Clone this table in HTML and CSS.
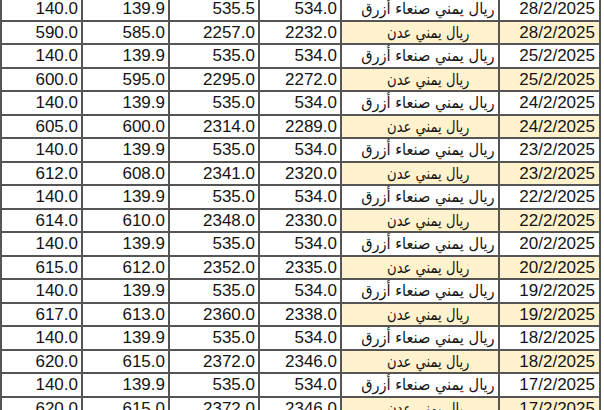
FILE: index.html
```html
<!DOCTYPE html>
<html lang="ar">
<head>
<meta charset="utf-8">
<title>أسعار الصرف</title>
<link rel="stylesheet" href="styles.css">
</head>
<body>
<table class="sheet" dir="ltr">
  <colgroup>
    <col class="c1"><col class="c2"><col class="c3"><col class="c4"><col class="c5"><col class="c6">
  </colgroup>
  <tbody>
    <tr><td>140.0</td><td>139.9</td><td>535.5</td><td>534.0</td><td class="name"><span class="ar">ريال يمني صنعاء أزرق</span></td><td class="date">28/2/2025</td></tr>
    <tr class="aden"><td>590.0</td><td>585.0</td><td>2257.0</td><td>2232.0</td><td class="name"><span class="ar">ريال يمني عدن</span></td><td class="date">28/2/2025</td></tr>
    <tr><td>140.0</td><td>139.9</td><td>535.0</td><td>534.0</td><td class="name"><span class="ar">ريال يمني صنعاء أزرق</span></td><td class="date">25/2/2025</td></tr>
    <tr class="aden"><td>600.0</td><td>595.0</td><td>2295.0</td><td>2272.0</td><td class="name"><span class="ar">ريال يمني عدن</span></td><td class="date">25/2/2025</td></tr>
    <tr><td>140.0</td><td>139.9</td><td>535.0</td><td>534.0</td><td class="name"><span class="ar">ريال يمني صنعاء أزرق</span></td><td class="date">24/2/2025</td></tr>
    <tr class="aden"><td>605.0</td><td>600.0</td><td>2314.0</td><td>2289.0</td><td class="name"><span class="ar">ريال يمني عدن</span></td><td class="date">24/2/2025</td></tr>
    <tr><td>140.0</td><td>139.9</td><td>535.0</td><td>534.0</td><td class="name"><span class="ar">ريال يمني صنعاء أزرق</span></td><td class="date">23/2/2025</td></tr>
    <tr class="aden"><td>612.0</td><td>608.0</td><td>2341.0</td><td>2320.0</td><td class="name"><span class="ar">ريال يمني عدن</span></td><td class="date">23/2/2025</td></tr>
    <tr><td>140.0</td><td>139.9</td><td>535.0</td><td>534.0</td><td class="name"><span class="ar">ريال يمني صنعاء أزرق</span></td><td class="date">22/2/2025</td></tr>
    <tr class="aden"><td>614.0</td><td>610.0</td><td>2348.0</td><td>2330.0</td><td class="name"><span class="ar">ريال يمني عدن</span></td><td class="date">22/2/2025</td></tr>
    <tr><td>140.0</td><td>139.9</td><td>535.0</td><td>534.0</td><td class="name"><span class="ar">ريال يمني صنعاء أزرق</span></td><td class="date">20/2/2025</td></tr>
    <tr class="aden"><td>615.0</td><td>612.0</td><td>2352.0</td><td>2335.0</td><td class="name"><span class="ar">ريال يمني عدن</span></td><td class="date">20/2/2025</td></tr>
    <tr><td>140.0</td><td>139.9</td><td>535.0</td><td>534.0</td><td class="name"><span class="ar">ريال يمني صنعاء أزرق</span></td><td class="date">19/2/2025</td></tr>
    <tr class="aden"><td>617.0</td><td>613.0</td><td>2360.0</td><td>2338.0</td><td class="name"><span class="ar">ريال يمني عدن</span></td><td class="date">19/2/2025</td></tr>
    <tr><td>140.0</td><td>139.9</td><td>535.0</td><td>534.0</td><td class="name"><span class="ar">ريال يمني صنعاء أزرق</span></td><td class="date">18/2/2025</td></tr>
    <tr class="aden"><td>620.0</td><td>615.0</td><td>2372.0</td><td>2346.0</td><td class="name"><span class="ar">ريال يمني عدن</span></td><td class="date">18/2/2025</td></tr>
    <tr><td>140.0</td><td>139.9</td><td>535.0</td><td>534.0</td><td class="name"><span class="ar">ريال يمني صنعاء أزرق</span></td><td class="date">17/2/2025</td></tr>
    <tr class="aden"><td>620.0</td><td>615.0</td><td>2372.0</td><td>2346.0</td><td class="name"><span class="ar">ريال يمني عدن</span></td><td class="date">17/2/2025</td></tr>
  </tbody>
</table>
</body>
</html>
```
FILE: styles.css
```css
html, body {
  margin: 0;
  padding: 0;
  background: #ffffff;
  overflow: hidden;
}

.sheet {
  table-layout: fixed;
  border-collapse: separate;
  border-spacing: 2px;
  background: #555555;
  width: 601px;
  margin-top: -3.8px;
  font-family: "Liberation Sans", Arial, sans-serif;
  font-size: 17px;
  color: #141414;
}

.c1 { width: 79px; }
.c2 { width: 85px; }
.c3 { width: 88px; }
.c4 { width: 80px; }
.c5 { width: 156px; }
.c6 { width: 99px; }

.sheet td {
  background: #ffffff;
  height: 21.5px;
  padding: 0 3px 0 0;
  text-align: right;
  line-height: 21px;
  white-space: nowrap;
  overflow: hidden;
}

.sheet td.name {
  font-family: "DejaVu Sans", sans-serif;
  font-size: 16px;
  direction: rtl;
  text-align: right;
  padding-right: 3px;
}

.ar {
  display: inline-block;
  transform: scaleX(0.91);
  transform-origin: right center;
}

.aden .ar {
  transform: scaleX(0.82);
}

.sheet td.date {
  padding-right: 4px;
}

.aden td.name {
  padding-right: 29px;
}

.aden td.name,
.aden td.date {
  background: #fff2cc;
}
```
